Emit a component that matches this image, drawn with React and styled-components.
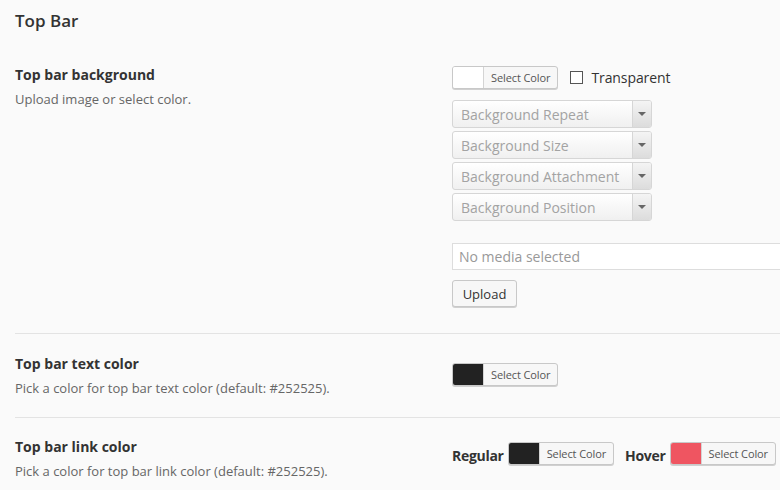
import React from 'react';
import styled, { createGlobalStyle } from 'styled-components';

const GlobalStyle = createGlobalStyle`
	html, body {
		margin: 0;
		padding: 0;
	}

	body {
		font-family: "Open Sans", "Liberation Sans", sans-serif;
		background: #fafafa;
		color: #333;
		width: 780px;
		height: 490px;
		overflow: hidden;
	}
`;

const Page = styled.div`
	padding-left: 15px;
`;

const Heading = styled.h2`
	margin: 9px 0 0;
	font-size: 17px;
	line-height: 23px;
	font-weight: 600;
	color: #333;
`;

const Row = styled.div`
	display: grid;
	grid-template-columns: 437px 1fr;
	padding: ${(p) => p.$pad};
	border-bottom: ${(p) => (p.$last ? 'none' : '1px solid #e3e3e3')};
`;

const Info = styled.div``;

const Title = styled.div`
	font-size: 14px;
	line-height: 19px;
	font-weight: 700;
	color: #333;
`;

const Desc = styled.div`
	margin-top: 6px;
	font-size: 13px;
	line-height: 18px;
	color: #666;
`;

const Controls = styled.div`
	display: flex;
	flex-direction: column;
	align-items: flex-start;
	padding-top: ${(p) => p.$top || 0}px;
	min-width: 0;
`;

const Line = styled.div`
	display: flex;
	align-items: ${(p) => p.$align || 'center'};
	margin-bottom: ${(p) => p.$mb || 0}px;
	white-space: nowrap;
`;

const Picker = styled.div`
	display: flex;
	flex-shrink: 0;
	height: 21px;
	border: 1px solid #c8c8c8;
	border-radius: 3px;
	box-shadow: 0 1px 0 #d0d0d0;
	overflow: hidden;
	background: #f7f7f7;
	margin-right: ${(p) => p.$mr || 0}px;
`;

const Swatch = styled.span`
	width: 30px;
	background: ${(p) => p.$color};
	border-right: 1px solid #d4d4d4;
`;

const PickerLabel = styled.span`
	display: flex;
	align-items: center;
	padding: 0 7px;
	font-size: 11px;
	color: #555;
	white-space: nowrap;
	letter-spacing: -0.1px;
`;

const Check = styled.label`
	display: flex;
	align-items: center;
	margin-left: 12px;
	font-size: 14px;
	color: #333;
	letter-spacing: -0.1px;
`;

const Box = styled.span`
	width: 11px;
	height: 11px;
	border: 1px solid #555;
	background: #fff;
	margin-right: 8px;
`;

const Select = styled.div`
	display: flex;
	width: 198px;
	height: 26px;
	border: 1px solid #d6d6d6;
	border-radius: 3px;
	background: linear-gradient(#ffffff, #f0f0f0);
	margin-bottom: 3px;
	overflow: hidden;
`;

const SelectText = styled.span`
	flex: 1;
	display: flex;
	align-items: center;
	padding-left: 8px;
	font-size: 14px;
	color: #a3a3a3;
	white-space: nowrap;
`;

const Arrow = styled.span`
	width: 18px;
	display: flex;
	align-items: center;
	justify-content: center;
	border-left: 1px solid #d6d6d6;
	background: linear-gradient(#f4f4f4, #dcdcdc);

	&::after {
		content: '';
		border-left: 4px solid transparent;
		border-right: 4px solid transparent;
		border-top: 4px solid #666;
	}
`;

const Media = styled.div`
	margin-top: 19px;
	width: 400px;
	height: 25px;
	border: 1px solid #ddd;
	background: #fff;
	display: flex;
	align-items: center;
	padding-left: 6px;
	font-size: 14px;
	color: #999;
`;

const Button = styled.div`
	margin-top: 10px;
	width: 63px;
	height: 25px;
	border: 1px solid #c8c8c8;
	border-radius: 3px;
	background: #f7f7f7;
	box-shadow: 0 1px 0 #d0d0d0;
	display: flex;
	align-items: center;
	justify-content: center;
	font-size: 13px;
	color: #333;
`;

const SubLabel = styled.span`
	font-size: 14px;
	font-weight: 700;
	color: #333;
	line-height: 20px;
	letter-spacing: -0.3px;
	margin-bottom: -1px;
	margin-right: 4px;
`;

const selects = ['Background Repeat', 'Background Size', 'Background Attachment', 'Background Position'];

function ColorPicker({ color, mr }) {
	return (
		<Picker $mr={mr}>
			<Swatch $color={color} />
			<PickerLabel>Select Color</PickerLabel>
		</Picker>
	);
}

function App() {
	return (
		<>
			<GlobalStyle />
			<Page>
				<Heading>Top Bar</Heading>
				<Row $pad="33px 0 26px">
					<Info>
						<Title>Top bar background</Title>
						<Desc>Upload image or select color.</Desc>
					</Info>
					<Controls $top={1}>
						<Line $mb={11}>
							<ColorPicker color="#ffffff" />
							<Check>
								<Box />
								Transparent
							</Check>
						</Line>
						{selects.map((s) => (
							<Select key={s}>
								<SelectText>{s}</SelectText>
								<Arrow />
							</Select>
						))}
						<Media>No media selected</Media>
						<Button>Upload</Button>
					</Controls>
				</Row>
				<Row $pad="20px 0 20px">
					<Info>
						<Title>Top bar text color</Title>
						<Desc>Pick a color for top bar text color (default: #252525).</Desc>
					</Info>
					<Controls $top={9}>
						<ColorPicker color="#222222" />
					</Controls>
				</Row>
				<Row $pad="19px 0 0" $last>
					<Info>
						<Title>Top bar link color</Title>
						<Desc>Pick a color for top bar link color (default: #252525).</Desc>
					</Info>
					<Controls $top={5}>
						<Line $align="flex-end">
							<SubLabel>Regular</SubLabel>
							<ColorPicker color="#222222" mr={11} />
							<SubLabel>Hover</SubLabel>
							<ColorPicker color="#ef5561" />
						</Line>
					</Controls>
				</Row>
			</Page>
		</>
	);
}

export default App;
